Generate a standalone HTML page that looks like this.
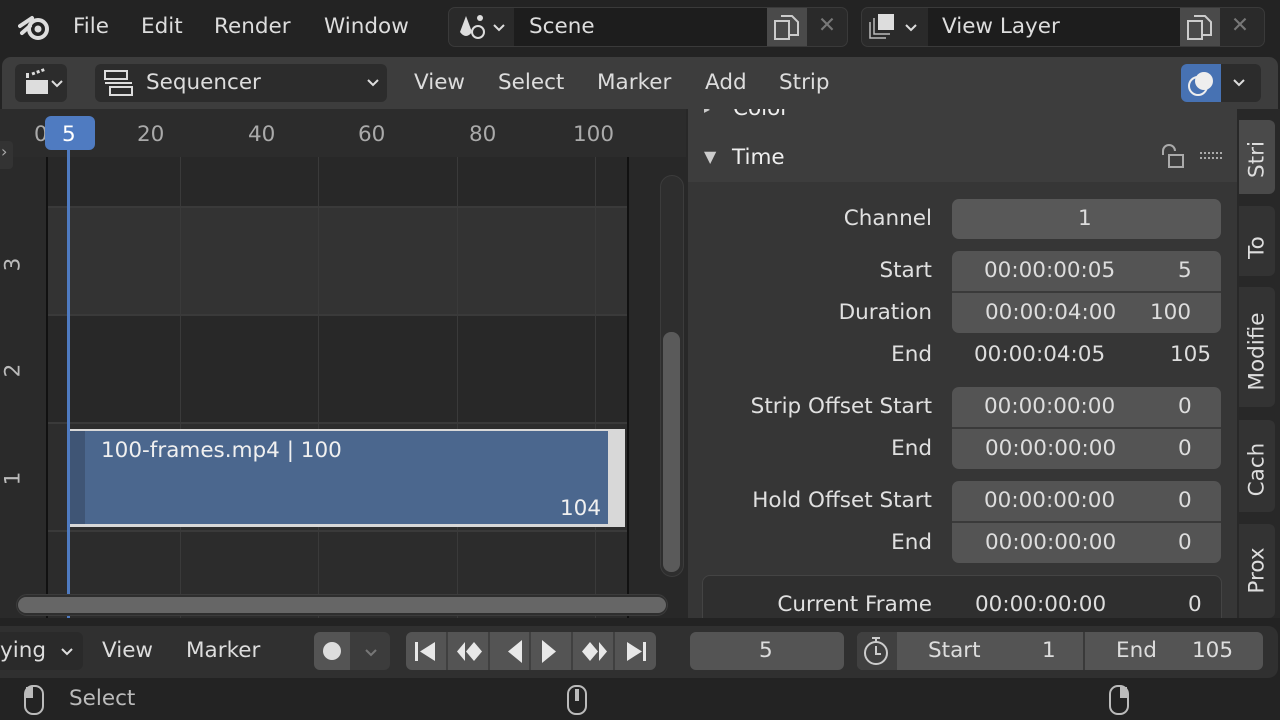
<!DOCTYPE html>
<html><head><meta charset="utf-8"><style>
*{margin:0;padding:0;box-sizing:border-box}
body{width:1280px;height:720px;overflow:hidden;background:#232323;font-family:"DejaVu Sans","Liberation Sans",sans-serif;color:#ddd;position:relative;font-size:21.5px}
.a{position:absolute}
.t{position:absolute;white-space:nowrap;line-height:1}
.fld{position:absolute;background:#545454;border-radius:7px}
.lbl{position:absolute;text-align:right;white-space:nowrap;line-height:1;color:#e0e0e0}
.vt{position:absolute;transform:rotate(-90deg);transform-origin:center;white-space:nowrap}
</style></head><body>
<!-- sidebar (drawn first so header overlaps) -->
<div class="a" style="left:686px;top:109px;width:551px;height:509px;background:#303030"></div>
<div class="a" style="left:686px;top:109px;width:551px;height:73px;background:#3d3d3d"></div>
<div class="a" style="left:686px;top:182px;width:551px;height:436px;background:#363636"></div>
<div class="a" style="left:686px;top:109px;width:2px;height:509px;background:#282828"></div>
<div class="a" style="left:686px;top:109px;width:551px;height:20px;overflow:hidden">
<div class="t" style="left:47px;top:-11px;color:#eee">Color</div>
<div class="t" style="left:18px;top:-6px;font-size:12px;color:#ccc">▸</div>
</div>
<div class="t" style="left:704px;top:149px;font-size:16px;color:#ccc">▼</div>
<div class="t" style="left:732px;top:147px;color:#eee">Time</div>
<svg class="a" style="left:1158px;top:143px" width="66" height="28"><path d="M5 12 v-4 a6 6 0 0 1 12 0" fill="none" stroke="#aaa" stroke-width="2"/><rect x="11" y="12" width="14" height="12" fill="none" stroke="#aaa" stroke-width="2"/><path d="M42 10 h22 M42 15 h22" stroke="#aaa" stroke-width="2" stroke-dasharray="2 2"/></svg>

<!-- top bar -->
<svg class="a" style="left:18px;top:12px" width="34" height="30" viewBox="0 0 34 30"><circle cx="20" cy="17" r="9" fill="none" stroke="#ddd" stroke-width="4"/><circle cx="20" cy="17" r="3.5" fill="#ddd"/><path d="M2 14 L14 6 M4 21 L12 14" stroke="#ddd" stroke-width="4" stroke-linecap="round"/></svg>
<div class="t" style="left:73px;top:16px">File</div>
<div class="t" style="left:141px;top:16px">Edit</div>
<div class="t" style="left:214px;top:16px">Render</div>
<div class="t" style="left:324px;top:16px">Window</div>
<div class="a" style="left:448px;top:7px;width:400px;height:40px;background:#2a2a2a;border:1px solid #3a3a3a;border-radius:7px"></div>
<div class="a" style="left:514px;top:8px;width:253px;height:38px;background:#1d1d1d"></div>
<div class="a" style="left:767px;top:8px;width:40px;height:38px;background:#4a4a4a"></div>
<svg class="a" style="left:456px;top:12px" width="56" height="30"><path d="M10 4 L4 20 Q10 28 16 20 Z" fill="#ddd"/><circle cx="22" cy="20" r="6" fill="none" stroke="#ddd" stroke-width="2"/><circle cx="24" cy="6" r="3" fill="#ddd"/><path d="M38 13 l5 5 5-5" stroke="#ddd" stroke-width="2" fill="none"/></svg>
<div class="t" style="left:529px;top:16px">Scene</div>
<svg class="a" style="left:772px;top:13px" width="30" height="30"><rect x="3" y="8" width="14" height="18" fill="none" stroke="#ccc" stroke-width="2"/><path d="M9 3 h11 l6 6 v13 h-9" fill="none" stroke="#ccc" stroke-width="2"/></svg>
<div class="t" style="left:818px;top:15px;color:#777">✕</div>
<div class="a" style="left:861px;top:7px;width:404px;height:40px;background:#2a2a2a;border:1px solid #3a3a3a;border-radius:7px"></div>
<div class="a" style="left:928px;top:8px;width:252px;height:38px;background:#1d1d1d"></div>
<div class="a" style="left:1180px;top:8px;width:40px;height:38px;background:#4a4a4a"></div>
<svg class="a" style="left:868px;top:12px" width="56" height="30"><rect x="10" y="2" width="16" height="16" fill="#ddd"/><path d="M6 6 v16 h16 M2 10 v16 h16" fill="none" stroke="#bbb" stroke-width="1.5"/><path d="M38 13 l5 5 5-5" stroke="#ddd" stroke-width="2" fill="none"/></svg>
<div class="t" style="left:942px;top:16px">View Layer</div>
<svg class="a" style="left:1185px;top:13px" width="30" height="30"><rect x="3" y="8" width="14" height="18" fill="none" stroke="#ccc" stroke-width="2"/><path d="M9 3 h11 l6 6 v13 h-9" fill="none" stroke="#ccc" stroke-width="2"/></svg>
<div class="t" style="left:1231px;top:15px;color:#777">✕</div>

<!-- header -->
<div class="a" style="left:2px;top:57px;width:1276px;height:52px;background:#3d3d3d;border-radius:9px 9px 0 0"></div>
<div class="a" style="left:15px;top:64px;width:52px;height:38px;background:#2c2c2c;border-radius:6px"></div>
<svg class="a" style="left:22px;top:66px" width="60" height="34"><rect x="4" y="14" width="22" height="14" fill="#ddd"/><rect x="4" y="7" width="3" height="5" fill="#ddd"/><path d="M10 8 l14-5" stroke="#ddd" stroke-width="3" stroke-dasharray="3 2"/><path d="M30 15 l5 5 5-5" stroke="#ddd" stroke-width="2" fill="none"/></svg>
<div class="a" style="left:95px;top:64px;width:292px;height:38px;background:#2c2c2c;border-radius:6px"></div>
<svg class="a" style="left:102px;top:68px" width="34" height="32"><rect x="3" y="3" width="22" height="8" fill="none" stroke="#ddd" stroke-width="2"/><path d="M3 15 h27" stroke="#ddd" stroke-width="2"/><rect x="8" y="19" width="22" height="8" fill="none" stroke="#ddd" stroke-width="2"/></svg>
<div class="t" style="left:146px;top:72px">Sequencer</div>
<svg class="a" style="left:366px;top:77px" width="16" height="12"><path d="M2 3 l5 5 5-5" stroke="#ddd" stroke-width="2" fill="none"/></svg>
<div class="t" style="left:414px;top:72px">View</div>
<div class="t" style="left:498px;top:72px">Select</div>
<div class="t" style="left:597px;top:72px">Marker</div>
<div class="t" style="left:705px;top:72px">Add</div>
<div class="t" style="left:779px;top:72px">Strip</div>
<div class="a" style="left:1181px;top:64px;width:40px;height:38px;background:#4772b3;border-radius:6px 0 0 6px"></div>
<div class="a" style="left:1221px;top:64px;width:40px;height:38px;background:#2c2c2c;border-radius:0 6px 6px 0"></div>
<svg class="a" style="left:1184px;top:66px" width="36" height="34"><circle cx="20" cy="15" r="9" fill="#eee"/><circle cx="14" cy="20" r="9" fill="none" stroke="#eee" stroke-width="2"/></svg>
<svg class="a" style="left:1232px;top:77px" width="16" height="12"><path d="M2 3 l5 5 5-5" stroke="#ddd" stroke-width="2" fill="none"/></svg>

<!-- sequencer -->
<div class="a" style="left:0;top:109px;width:686px;height:509px;background:#282828"></div>
<div class="a" style="left:0;top:109px;width:686px;height:48px;background:#2c2c2c"></div>
<div class="a" style="left:47px;top:207px;width:581px;height:108px;background:#333"></div>
<div class="a" style="left:47px;top:423px;width:581px;height:108px;background:#2d2d2d"></div>
<div class="a" style="left:47px;top:531px;width:581px;height:87px;background:#2c2c2c"></div>
<div class="a" style="left:0;top:157px;width:47px;height:461px;background:#2a2a2a"></div>
<div class="a" style="left:47px;top:206px;width:581px;height:2px;background:#3a3a3a"></div>
<div class="a" style="left:47px;top:314px;width:581px;height:2px;background:#3a3a3a"></div>
<div class="a" style="left:47px;top:422px;width:581px;height:2px;background:#3a3a3a"></div>
<div class="a" style="left:47px;top:530px;width:581px;height:2px;background:#3a3a3a"></div>
<div class="a" style="left:180px;top:157px;width:1px;height:461px;background:#3a3a3a"></div>
<div class="a" style="left:318px;top:157px;width:1px;height:461px;background:#3a3a3a"></div>
<div class="a" style="left:457px;top:157px;width:1px;height:461px;background:#3a3a3a"></div>
<div class="a" style="left:595px;top:157px;width:1px;height:461px;background:#3a3a3a"></div>
<div class="a" style="left:46px;top:157px;width:2px;height:461px;background:#111"></div>
<div class="a" style="left:627px;top:157px;width:2px;height:461px;background:#111"></div>
<div class="t" style="left:34px;top:124px;color:#aaa">0</div>
<div class="t" style="left:137px;top:124px;color:#aaa">20</div>
<div class="t" style="left:248px;top:124px;color:#aaa">40</div>
<div class="t" style="left:358px;top:124px;color:#aaa">60</div>
<div class="t" style="left:469px;top:124px;color:#aaa">80</div>
<div class="t" style="left:573px;top:124px;color:#aaa">100</div>
<div class="a" style="left:0;top:141px;width:13px;height:28px;background:#333;border-radius:0 4px 4px 0"></div>
<div class="t" style="left:1px;top:144px;font-size:16px;color:#aaa">›</div>
<div class="vt" style="left:6px;top:252px;color:#bbb">3</div>
<div class="vt" style="left:6px;top:358px;color:#bbb">2</div>
<div class="vt" style="left:6px;top:466px;color:#bbb">1</div>
<!-- strip -->
<div class="a" style="left:70px;top:429px;width:555px;height:98px;background:#d8d8d8"></div>
<div class="a" style="left:70px;top:431px;width:538px;height:93px;background:#4b678e"></div>
<div class="a" style="left:70px;top:431px;width:15px;height:93px;background:#3f5575"></div>
<div class="t" style="left:101px;top:440px;color:#f0f0f0">100-frames.mp4 | 100</div>
<div class="t" style="left:560px;top:498px;color:#f0f0f0">104</div>
<!-- playhead -->
<div class="a" style="left:67px;top:140px;width:3px;height:478px;background:#4f7bc1"></div>
<div class="a" style="left:45px;top:116px;width:50px;height:34px;background:#4f7bc1;border-radius:6px"></div>
<div class="t" style="left:62px;top:124px;color:#fff">5</div>
<!-- scrollbars -->
<div class="a" style="left:16px;top:594px;width:652px;height:22px;background:#2e2e2e;border-radius:11px;border:1px solid #3c3c3c"></div>
<div class="a" style="left:18px;top:597px;width:648px;height:16px;background:#666;border-radius:8px"></div>
<div class="a" style="left:660px;top:175px;width:24px;height:402px;background:#2e2e2e;border-radius:12px;border:1px solid #3c3c3c"></div>
<div class="a" style="left:663px;top:332px;width:17px;height:240px;background:#5a5a5a;border-radius:8px"></div>

<!-- sidebar fields -->
<div class="lbl" style="right:348px;top:208px">Channel</div>
<div class="fld" style="left:952px;top:199px;width:269px;height:40px;background:#585858"></div>
<div class="t" style="left:1078px;top:208px">1</div>

<div class="lbl" style="right:348px;top:260px">Start</div>
<div class="lbl" style="right:348px;top:302px">Duration</div>
<div class="fld" style="left:952px;top:251px;width:269px;height:82px"></div>
<div class="a" style="left:952px;top:291px;width:269px;height:2px;background:#3a3a3a"></div>
<div class="t" style="left:984px;top:260px">00:00:00:05</div><div class="t" style="left:1178px;top:260px">5</div>
<div class="t" style="left:985px;top:302px">00:00:04:00</div><div class="t" style="left:1150px;top:302px">100</div>
<div class="lbl" style="right:348px;top:344px">End</div>
<div class="t" style="left:974px;top:344px">00:00:04:05</div><div class="t" style="left:1170px;top:344px">105</div>

<div class="lbl" style="right:348px;top:396px">Strip Offset Start</div>
<div class="lbl" style="right:348px;top:438px">End</div>
<div class="fld" style="left:952px;top:387px;width:269px;height:82px"></div>
<div class="a" style="left:952px;top:427px;width:269px;height:2px;background:#3a3a3a"></div>
<div class="t" style="left:984px;top:396px">00:00:00:00</div><div class="t" style="left:1178px;top:396px">0</div>
<div class="t" style="left:985px;top:438px">00:00:00:00</div><div class="t" style="left:1178px;top:438px">0</div>

<div class="lbl" style="right:348px;top:490px">Hold Offset Start</div>
<div class="lbl" style="right:348px;top:532px">End</div>
<div class="fld" style="left:952px;top:481px;width:269px;height:82px"></div>
<div class="a" style="left:952px;top:521px;width:269px;height:2px;background:#3a3a3a"></div>
<div class="t" style="left:984px;top:490px">00:00:00:00</div><div class="t" style="left:1178px;top:490px">0</div>
<div class="t" style="left:985px;top:532px">00:00:00:00</div><div class="t" style="left:1178px;top:532px">0</div>

<div class="a" style="left:702px;top:575px;width:520px;height:60px;background:#2f2f2f;border:1px solid #444;border-radius:8px"></div>
<div class="lbl" style="right:348px;top:594px">Current Frame</div>
<div class="t" style="left:975px;top:594px">00:00:00:00</div><div class="t" style="left:1188px;top:594px">0</div>

<!-- tabs -->
<div class="a" style="left:1237px;top:109px;width:43px;height:509px;background:#282828"></div>
<div class="a" style="left:1239px;top:120px;width:36px;height:74px;background:#4a4a4a;border-radius:0 6px 6px 0"></div>
<div class="a" style="left:1239px;top:206px;width:36px;height:70px;background:#333;border-radius:0 6px 6px 0"></div>
<div class="a" style="left:1239px;top:287px;width:36px;height:120px;background:#333;border-radius:0 6px 6px 0"></div>
<div class="a" style="left:1239px;top:420px;width:36px;height:92px;background:#333;border-radius:0 6px 6px 0"></div>
<div class="a" style="left:1239px;top:524px;width:36px;height:94px;background:#333;border-radius:0 6px 6px 0"></div>
<div class="vt" style="left:1224px;top:147px;width:66px;text-align:center">Stri</div>
<div class="vt" style="left:1224px;top:235px;width:66px;text-align:center">To</div>
<div class="vt" style="left:1199px;top:339px;width:116px;text-align:center">Modifie</div>
<div class="vt" style="left:1214px;top:457px;width:86px;text-align:center">Cach</div>
<div class="vt" style="left:1214px;top:558px;width:86px;text-align:center">Prox</div>

<!-- timeline -->
<div class="a" style="left:0;top:618px;width:1280px;height:62px;background:#232323"></div>
<div class="a" style="left:0;top:626px;width:1278px;height:52px;background:#303030;border-radius:0 10px 10px 0"></div>
<div class="a" style="left:0;top:632px;width:83px;height:38px;background:#2a2a2a;border-radius:0 6px 6px 0"></div>
<div class="t" style="left:0;top:640px">ying</div>
<svg class="a" style="left:60px;top:646px" width="16" height="12"><path d="M2 3 l5 5 5-5" stroke="#ddd" stroke-width="2" fill="none"/></svg>
<div class="t" style="left:102px;top:640px">View</div>
<div class="t" style="left:186px;top:640px">Marker</div>
<div class="a" style="left:314px;top:632px;width:36px;height:38px;background:#545454;border-radius:6px 0 0 6px"></div>
<div class="a" style="left:350px;top:632px;width:40px;height:38px;background:#3c3c3c;border-radius:0 6px 6px 0"></div>
<div class="a" style="left:323px;top:642px;width:18px;height:18px;background:#ddd;border-radius:50%"></div>
<svg class="a" style="left:364px;top:647px" width="16" height="12"><path d="M2 3 l5 5 5-5" stroke="#777" stroke-width="2" fill="none"/></svg>
<div class="a" style="left:406px;top:632px;width:250px;height:38px;background:#545454;border-radius:6px"></div>
<svg class="a" style="left:406px;top:632px" width="250" height="38">
<g stroke="#3a3a3a" stroke-width="1.5"><path d="M41 0v38M83 0v38M124 0v38M166 0v38M208 0v38"/></g>
<g fill="#e8e8e8"><rect x="9" y="10" width="3" height="19"/><path d="M29 10 L14 19.5 L29 29Z"/>
<path d="M51 19.5 L59 10 L59 29Z M60 19.5 L68 10 L76 19.5 L68 29Z"/>
<path d="M102 19.5 L116 8 L116 31Z"/>
<path d="M136 8 L150 19.5 L136 31Z"/>
<path d="M176 19.5 L184 10 L192 19.5 L184 29Z M193 10 L201 19.5 L193 29Z"/>
<path d="M221 10 L236 19.5 L221 29Z"/><rect x="237" y="10" width="3" height="19"/></g></svg>
<div class="a" style="left:690px;top:632px;width:154px;height:38px;background:#545454;border-radius:6px"></div>
<div class="t" style="left:759px;top:640px">5</div>
<div class="a" style="left:857px;top:632px;width:406px;height:38px;background:#545454;border-radius:6px"></div>
<div class="a" style="left:857px;top:632px;width:40px;height:38px;background:#404040;border-radius:6px 0 0 6px"></div>
<div class="a" style="left:1083px;top:632px;width:2px;height:38px;background:#3a3a3a"></div>
<svg class="a" style="left:861px;top:634px" width="32" height="34"><circle cx="15" cy="19" r="11" fill="none" stroke="#ccc" stroke-width="2"/><path d="M15 12v8h5M11 4h8M15 4v4" stroke="#ccc" stroke-width="2" fill="none"/></svg>
<div class="t" style="left:928px;top:640px">Start</div><div class="t" style="left:1042px;top:640px">1</div>
<div class="t" style="left:1116px;top:640px">End</div><div class="t" style="left:1192px;top:640px">105</div>

<!-- status bar -->
<svg class="a" style="left:20px;top:683px" width="30" height="34"><rect x="5" y="3" width="18" height="28" rx="8" fill="none" stroke="#bbb" stroke-width="2"/><rect x="6" y="4" width="7" height="11" fill="#bbb"/></svg>
<div class="t" style="left:69px;top:688px;color:#bbb">Select</div>
<svg class="a" style="left:563px;top:683px" width="30" height="34"><rect x="5" y="3" width="18" height="28" rx="8" fill="none" stroke="#bbb" stroke-width="2"/><rect x="12" y="6" width="4" height="12" fill="#bbb"/></svg>
<svg class="a" style="left:1105px;top:683px" width="30" height="34"><rect x="5" y="3" width="18" height="28" rx="8" fill="none" stroke="#bbb" stroke-width="2"/><rect x="15" y="4" width="7" height="11" fill="#bbb"/></svg>
</body></html>
